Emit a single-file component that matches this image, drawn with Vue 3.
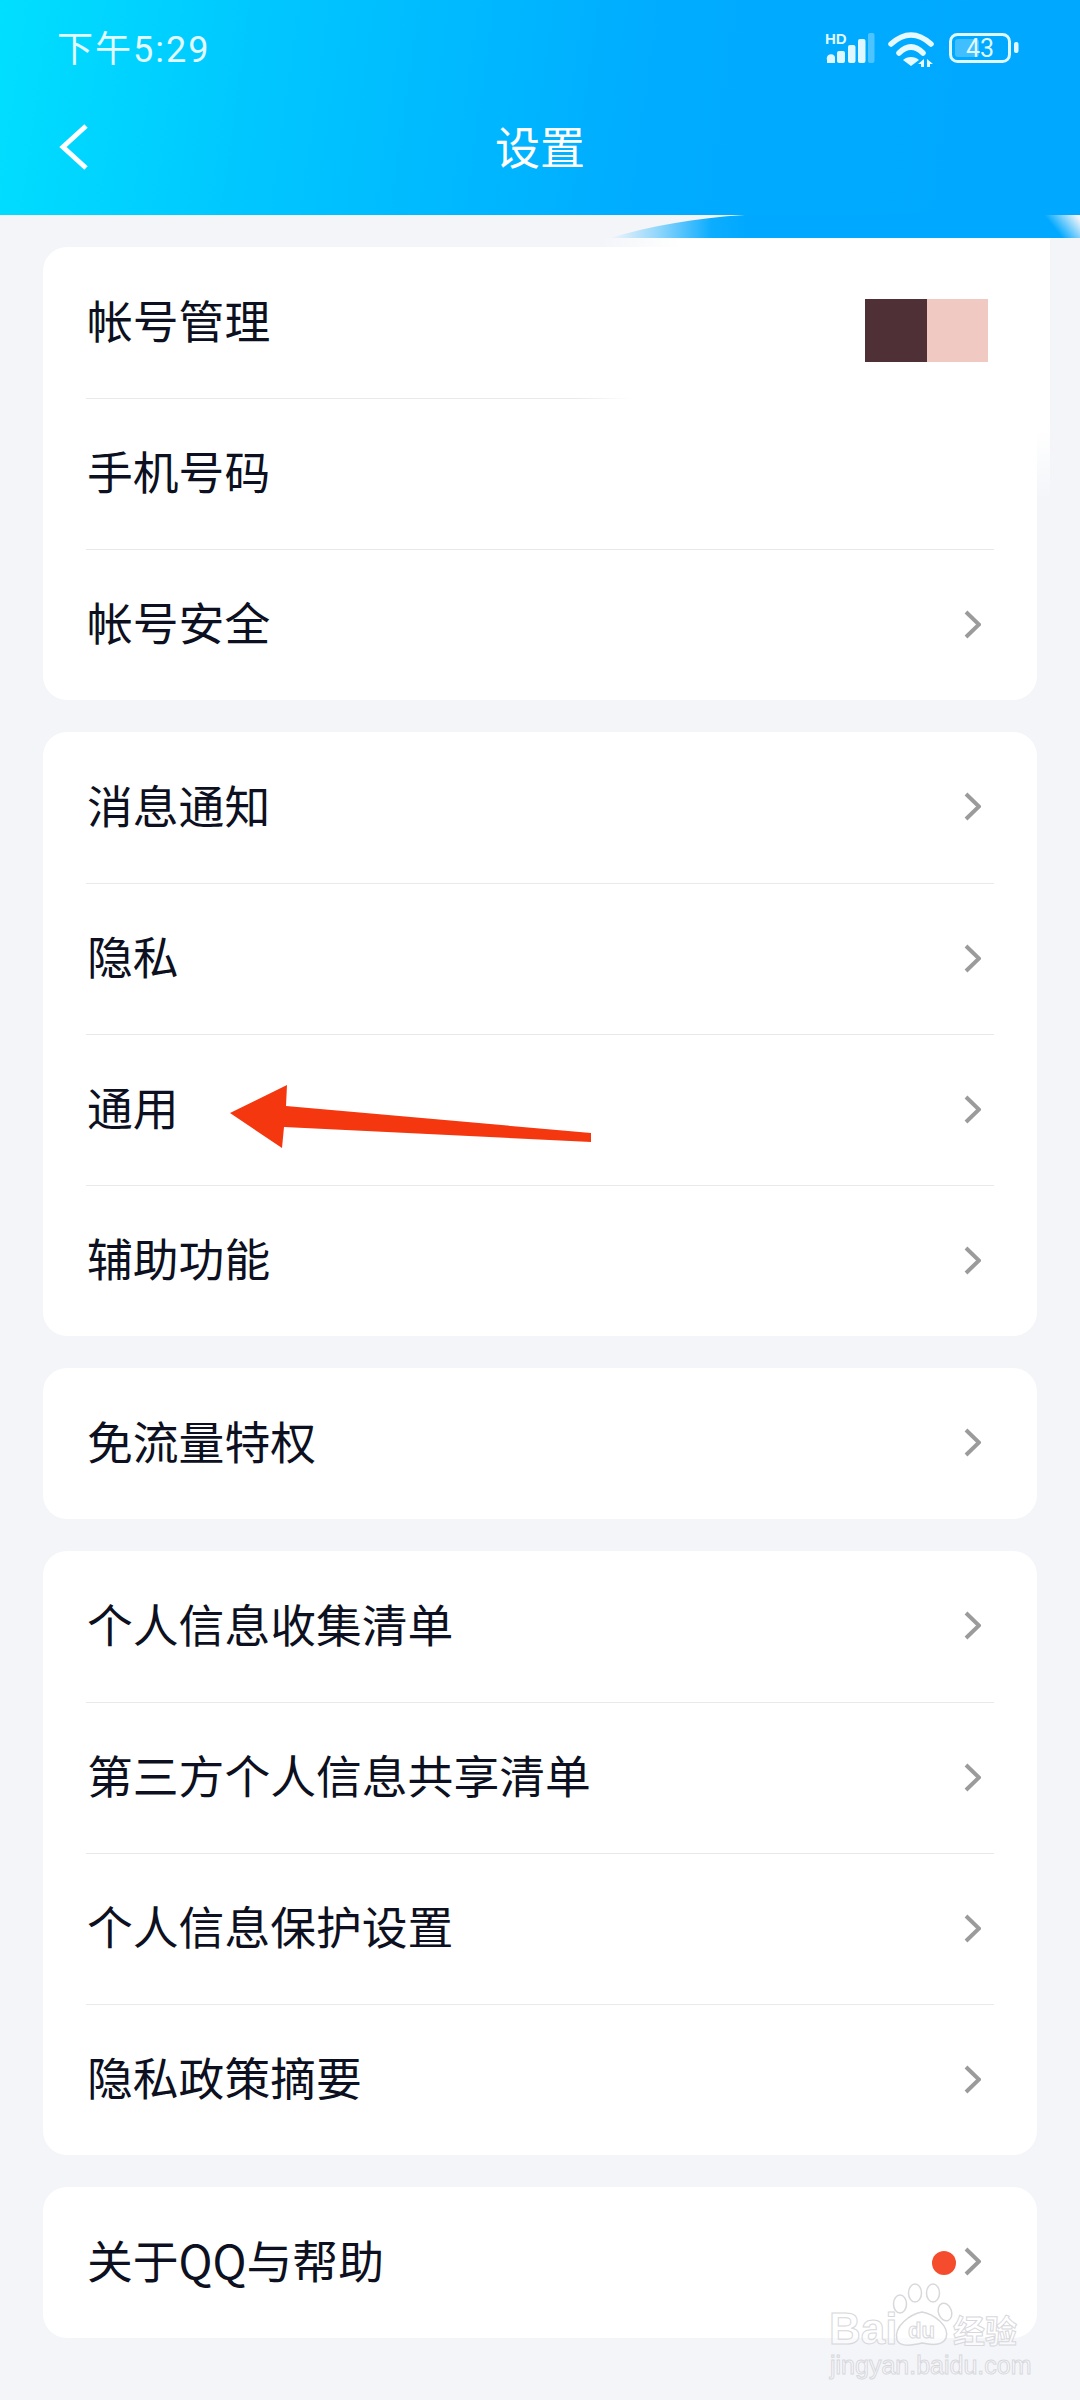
<script setup>
const groups = [
  [
    { label: '帐号管理', swatch: true, noArrow: true },
    { label: '手机号码', noArrow: true, fadeLine: true },
    { label: '帐号安全' }
  ],
  [
    { label: '消息通知' },
    { label: '隐私' },
    { label: '通用' },
    { label: '辅助功能' }
  ],
  [{ label: '免流量特权' }],
  [
    { label: '个人信息收集清单' },
    { label: '第三方个人信息共享清单' },
    { label: '个人信息保护设置' },
    { label: '隐私政策摘要' }
  ],
  [{ label: '关于QQ与帮助', dot: true }]
]
</script>

<template>
  <div class="page">
    <header class="header">
      <div class="status">
        <span class="time">下午5:29</span>
        <svg class="status-icons" width="200" height="40" viewBox="820 30 200 40">
          <text x="825" y="45" class="hd">HD</text>
          <g fill="#dff7ff">
            <path d="M827 64v-3a4 4 0 0 1 8-3v6z" />
            <rect x="837" y="52" width="8" height="12" rx="2" />
            <rect x="848" y="46" width="7.5" height="18" rx="2" />
            <rect x="858" y="40" width="7.5" height="24" rx="2" />
            <rect x="868" y="34" width="6.5" height="30" rx="2" opacity="0.35" />
          </g>
          <g fill="none" stroke="#e6f9ff" stroke-width="5.5" stroke-linecap="round">
            <path d="M891 45Q911 27 931 45" />
            <path d="M899 54Q911 42 923 54" />
          </g>
          <path d="M911 67l-8-6c4-4 12-4 16 0z" fill="#e6f9ff" />
          <path d="M921 68h3v-8l-6 5h3zM927 68v-8l6 5h-3v3z" fill="#e6f9ff" />
          <rect x="950.500" y="35.500" width="59" height="27" rx="7" fill="none" stroke="#dff7ff" stroke-width="3" />
          <rect x="955" y="40" width="24" height="18" rx="3" fill="#fff" opacity="0.25" />
          <text x="980" y="58" class="batt">43</text>
          <rect x="1014" y="43" width="4.500" height="11" rx="2" fill="#dff7ff" />
        </svg>
      </div>
      <div class="nav">
        <svg class="back" width="34" height="50" viewBox="0 0 34 50">
          <path d="M28 4L5 25l23 21" fill="none" stroke="#fff" stroke-width="5" />
        </svg>
        <span class="title">设置</span>
      </div>
    </header>

    <main class="content">
      <section v-for="(group, i) in groups" :key="i" class="card">
        <div
          v-for="(item, j) in group"
          :key="item.label"
          class="row"
          :class="{ first: j === 0, 'fade-line': item.fadeLine }"
        >
          <span class="label">{{ item.label }}</span>
          <div v-if="item.swatch" class="swatch">
            <i class="dark"></i>
            <i class="light"></i>
          </div>
          <i v-if="item.dot" class="dot"></i>
          <svg v-if="!item.noArrow" class="chevron" width="17" height="29" viewBox="0 0 17 29">
            <path d="M2 2l13 12.500L2 27" fill="none" stroke="#9b9b9b" stroke-width="4" />
          </svg>
        </div>
      </section>
    </main>

    <!-- pieces that were pasted over the screenshot -->
    <svg class="patch" width="540" height="300" viewBox="540 215 540 300">
      <defs>
        <linearGradient id="stripFade" gradientUnits="userSpaceOnUse" x1="610" y1="0" x2="745" y2="0">
          <stop offset="0" stop-color="#00a9ff" stop-opacity="0" />
          <stop offset="0.35" stop-color="#00a9ff" stop-opacity="0.4" />
          <stop offset="0.75" stop-color="#00a9ff" stop-opacity="0.95" />
          <stop offset="1" stop-color="#00a9ff" />
        </linearGradient>
        <linearGradient id="stripEnd" gradientUnits="userSpaceOnUse" x1="1056" y1="230" x2="1076" y2="214">
          <stop offset="0" stop-color="#f3f5f9" stop-opacity="0" />
          <stop offset="1" stop-color="#f3f5f9" />
        </linearGradient>
        <linearGradient id="whiteIn" gradientUnits="userSpaceOnUse" x1="600" y1="0" x2="680" y2="0">
          <stop offset="0" stop-color="#fff" stop-opacity="0" />
          <stop offset="1" stop-color="#fff" />
        </linearGradient>
        <linearGradient id="whiteOut" gradientUnits="userSpaceOnUse" x1="0" y1="430" x2="0" y2="500">
          <stop offset="0" stop-color="#fff" />
          <stop offset="1" stop-color="#fff" stop-opacity="0" />
        </linearGradient>
      </defs>
      <path d="M745 215C695 218 650 226 610 238L745 238z" fill="url(#stripFade)" />
      <rect x="745" y="215" width="335" height="23" fill="#00a9ff" />
      <rect x="1045" y="215" width="35" height="23" fill="url(#stripEnd)" />
      <rect x="600" y="238" width="410" height="10" fill="url(#whiteIn)" />
      <rect x="1005" y="238" width="45" height="30" fill="#fff" />
      <rect x="1037" y="268" width="13" height="162" fill="#fff" />
      <rect x="1037" y="430" width="13" height="70" fill="url(#whiteOut)" />
    </svg>

    <svg class="pointer" width="370" height="70" viewBox="228 1082 370 70">
      <path d="M230 1113L287 1085L286 1106L591 1133V1142L284 1127L282 1148Z" fill="#f5370f" />
    </svg>

    <svg class="watermark" width="220" height="112" viewBox="825 2282 220 112">
      <g fill="rgba(255,255,255,0.55)" stroke="#d8d8dc" stroke-width="1.500">
        <ellipse cx="900" cy="2304" rx="6.500" ry="9" />
        <ellipse cx="915" cy="2293" rx="6.500" ry="9" />
        <ellipse cx="933" cy="2293" rx="6.500" ry="9" />
        <ellipse cx="945" cy="2312" rx="6.500" ry="9" transform="rotate(-20 945 2312)" />
        <path d="M897 2340c-4-14 14-26 25-28 12 2 28 14 24 26-3 8-15 7-24 5-8 2-22 5-25-3z" />
      </g>
      <text x="829" y="2344" class="wm-bai">Bai</text>
      <text x="908" y="2338" class="wm-du">du</text>
      <text x="953" y="2343" class="wm-cn">经验</text>
      <text x="830" y="2374" class="wm-url">jingyan.baidu.com</text>
    </svg>
  </div>
</template>

<style>
body {
  background: #f3f5f9;
}
</style>

<style scoped>
.page {
  position: relative;
  width: 1080px;
  height: 2400px;
  overflow: hidden;
  background: #f3f5f9;
  font-family: "Noto Sans CJK SC", "Noto Sans", sans-serif;
}

.header {
  height: 215px;
  background: linear-gradient(98deg, #00dfff 0, #00c6ff 25%, #00acff 60%, #00a8ff 100%);
  color: #fff;
}

.status {
  display: flex;
  align-items: center;
  justify-content: space-between;
  height: 98px;
  padding: 0 60px 0 57px;
}

.time {
  margin-top: 2px;
  font-size: 36px;
  line-height: 1;
  letter-spacing: 2px;
  color: #e2f9ff;
  font-family: Roboto, "Noto Sans CJK SC", sans-serif;
}

.status-icons {
  display: block;
}

.hd {
  font: 700 15px "Liberation Sans", sans-serif;
  fill: #dff7ff;
}

.batt {
  font: 400 25px Roboto, sans-serif;
  fill: #dff7ff;
  text-anchor: middle;
}

.nav {
  position: relative;
  display: flex;
  align-items: center;
  justify-content: center;
  height: 98px;
}

.back {
  position: absolute;
  left: 58px;
  top: 24px;
}

.title {
  padding-bottom: 3px;
  font-size: 45px;
  line-height: 1;
}

.content {
  display: flex;
  flex-direction: column;
  gap: 32px;
  padding: 32px 43px 0;
}

.card {
  background: #fff;
  border-radius: 24px;
}

.row {
  display: flex;
  align-items: center;
  box-sizing: border-box;
  height: 151px;
  margin: 0 43px;
  padding: 0 13px 0 1px;
  border-top: 1px solid #e9e9ec;
}

.row.first {
  border-top: 0;
}

.row.fade-line {
  border-image: linear-gradient(to right, #e9e9ec 490px, transparent 545px) 1;
}

.label {
  flex: 1;
  padding-bottom: 6px;
  font-size: 45.8px;
  line-height: 1;
  color: #0c1020;
}

.swatch {
  display: flex;
  height: 63px;
  margin: 15px -7px 0 0;
}

.swatch i {
  display: block;
  height: 100%;
}

.dark {
  width: 62px;
  background: #4f3037;
}

.light {
  width: 61px;
  background: #f0c9c2;
}

.dot {
  width: 24px;
  height: 24px;
  margin-right: 8px;
  border-radius: 50%;
  background: #f64c2e;
}

.chevron {
  display: block;
  margin-bottom: 2px;
}

.patch {
  position: absolute;
  left: 540px;
  top: 215px;
}

.pointer {
  position: absolute;
  left: 228px;
  top: 1082px;
}

.watermark {
  position: absolute;
  left: 825px;
  top: 2282px;
}

.wm-bai,
.wm-du,
.wm-cn,
.wm-url {
  fill: rgba(255, 255, 255, 0.6);
  stroke: #d8d8dc;
  stroke-width: 1px;
}

.wm-bai {
  font: 700 44px "Liberation Sans", sans-serif;
}

.wm-du {
  font: 700 22px "Liberation Sans", sans-serif;
}

.wm-cn {
  font: 700 32px "Noto Sans CJK SC", sans-serif;
}

.wm-url {
  font: 400 25px "Liberation Sans", sans-serif;
}
</style>
